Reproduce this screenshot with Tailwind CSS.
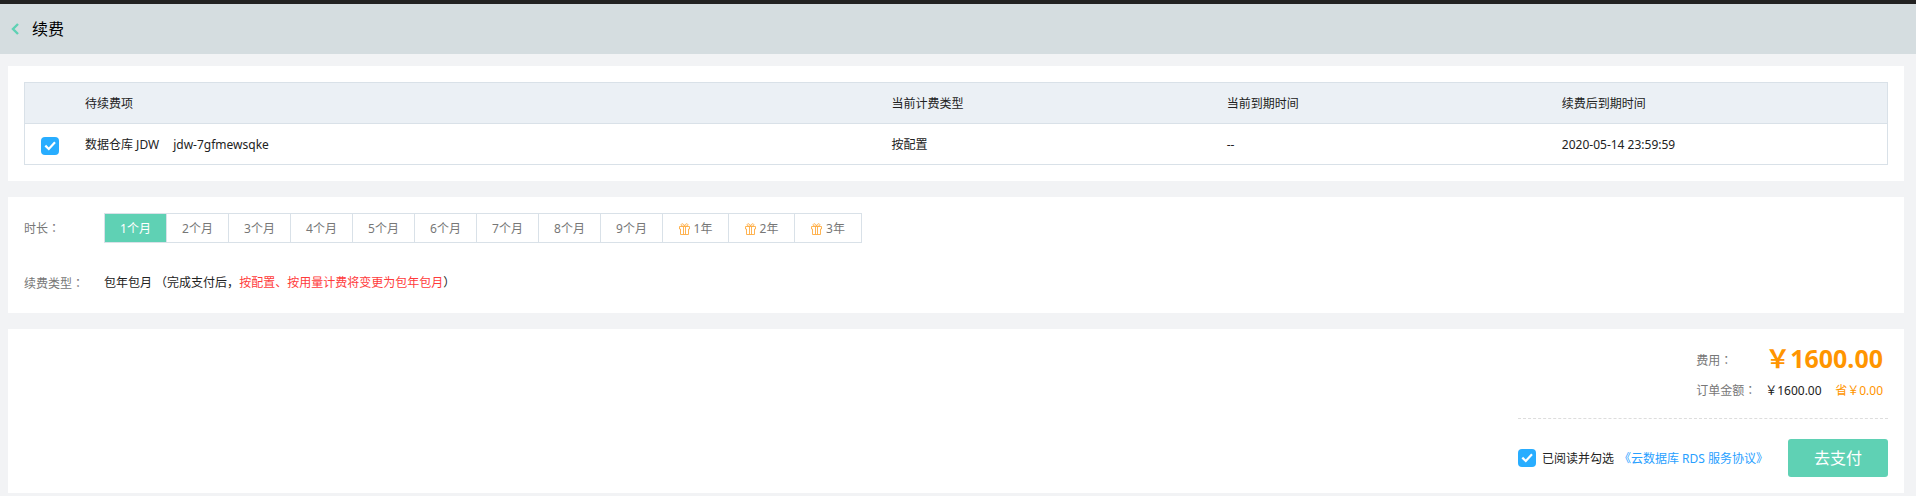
<!DOCTYPE html>
<html lang="zh-CN">
<head>
<meta charset="utf-8">
<meta name="viewport" content="width=device-width, initial-scale=1">
<title>续费</title>
<script src="https://cdn.jsdelivr.net/npm/@tailwindcss/browser@4"></script>
</head>
<body class="min-h-screen bg-[#f2f3f5] border-t-4 border-[#222222] font-['Noto_Sans','Noto_Sans_CJK_SC',sans-serif] text-xs text-[#222222]">
<svg class="hidden" aria-hidden="true">
  <symbol id="tick" viewBox="0 0 18 18"><path d="M4.3 8.6 L7.8 12 L14 5.3" fill="none" stroke="#fff" stroke-width="2.2"/></symbol>
  <symbol id="gift" viewBox="0 0 11 12">
    <g fill="none" stroke="#ffab40" stroke-width=".9">
      <path d="M1.5 6v5.5h8V6M.5 3.5v2.5h1M10.5 3.5v2.5h-1M.5 3.5h10M4.5 3.5v8M6.5 3.5v8M4.6 3.2C2.6 3.2 1.8 2.4 2.2 1.4 2.8.2 4.8.6 5.5 3.2M6.4 3.2C8.4 3.2 9.2 2.4 8.8 1.4 8.2.2 6.2.6 5.5 3.2"/>
    </g>
  </symbol>
</svg>
<header class="flex h-[50px] items-center bg-[#d5dde0]">
  <a href="#" aria-label="返回" class="ml-[11px] mr-[13px]">
    <svg class="h-3 w-2" viewBox="0 0 8 12"><path d="M7 1 L2 6 L7 11" fill="none" stroke="#5fd1b4" stroke-width="2.4"/></svg>
  </a>
  <h1 class="text-base text-black">续费</h1>
</header>
<main class="mt-3 mr-3 ml-2 flex flex-col gap-4">
  <section class="bg-white p-4">
    <table class="w-full table-fixed border-separate border-spacing-0 border border-[#d9e1e8] text-left">
      <colgroup><col class="w-[50px]"><col><col class="w-[18%]"><col class="w-[18%]"><col class="w-[18%]"></colgroup>
      <thead>
        <tr class="h-[41px] bg-[#ebf0f5]">
          <th class="border-b border-[#d9e1e8] p-0" aria-label="选择"></th>
          <th class="border-b border-[#d9e1e8] px-2.5 pt-0.5 pb-0 font-normal">待续费项</th>
          <th class="border-b border-[#d9e1e8] px-2.5 pt-0.5 pb-0 font-normal">当前计费类型</th>
          <th class="border-b border-[#d9e1e8] px-2.5 pt-0.5 pb-0 font-normal">当前到期时间</th>
          <th class="border-b border-[#d9e1e8] px-2.5 pt-0.5 pb-0 font-normal">续费后到期时间</th>
        </tr>
      </thead>
      <tbody>
        <tr class="h-10">
          <td class="p-0">
            <span class="mt-1 ml-4 grid size-[18px]">
              <input type="checkbox" checked aria-label="数据仓库 JDW" class="col-start-1 row-start-1 size-[18px] appearance-none rounded bg-[#28adff]">
              <svg class="pointer-events-none col-start-1 row-start-1 size-[18px]"><use href="#tick"/></svg>
            </span>
          </td>
          <td class="px-2.5 pt-0.5 pb-0"><span class="mr-3.5">数据仓库 JDW</span><span>jdw-7gfmewsqke</span></td>
          <td class="px-2.5 pt-0.5 pb-0">按配置</td>
          <td class="px-2.5 pt-0.5 pb-0">--</td>
          <td class="px-2.5 pt-0.5 pb-0">2020-05-14 23:59:59</td>
        </tr>
      </tbody>
    </table>
  </section>

  <section class="flex flex-col gap-6 bg-white p-4">
    <div class="flex h-[30px] items-center">
      <span class="w-20 text-[#777777]">时长<span class="font-['Noto_Sans_CJK_TC']" lang="zh-TW">：</span></span>
      <div class="flex h-[30px] divide-x divide-[#d9e1e8] border border-[#d9e1e8] text-[#777777]" role="group" aria-label="时长">
        <button type="button" aria-pressed="true" class="w-[62px] bg-[#5fd1b4] pt-0.5 text-white">1个月</button>
        <button type="button" class="w-[62px] pt-0.5">2个月</button>
        <button type="button" class="w-[62px] pt-0.5">3个月</button>
        <button type="button" class="w-[62px] pt-0.5">4个月</button>
        <button type="button" class="w-[62px] pt-0.5">5个月</button>
        <button type="button" class="w-[62px] pt-0.5">6个月</button>
        <button type="button" class="w-[62px] pt-0.5">7个月</button>
        <button type="button" class="w-[62px] pt-0.5">8个月</button>
        <button type="button" class="w-[62px] pt-0.5">9个月</button>
        <button type="button" class="flex w-[66px] items-center justify-center gap-1 pt-0.5"><svg class="h-3 w-[11px]"><use href="#gift"/></svg>1年</button>
        <button type="button" class="flex w-[66px] items-center justify-center gap-1 pt-0.5"><svg class="h-3 w-[11px]"><use href="#gift"/></svg>2年</button>
        <button type="button" class="flex w-[66px] items-center justify-center gap-1 pt-0.5"><svg class="h-3 w-[11px]"><use href="#gift"/></svg>3年</button>
      </div>
    </div>
    <div class="flex h-[30px] items-center pt-0.5">
      <span class="w-20 text-[#777777]">续费类型<span class="font-['Noto_Sans_CJK_TC']" lang="zh-TW">：</span></span>
      <p>包年包月 （完成支付后，<span class="text-[#ff3b3b]">按配置、按用量计费将变更为包年包月</span>）</p>
    </div>
  </section>

  <section class="flex flex-col items-end bg-white p-4">
    <dl class="grid grid-cols-[69px_auto] grid-rows-[30px_30px] pr-[5px] leading-[30px]">
      <dt class="text-[#777777]">费用<span class="font-['Noto_Sans_CJK_TC']" lang="zh-TW">：</span></dt>
      <dd class="text-right text-[25px] leading-[26px] font-bold text-[#ff9500]">￥1600.00</dd>
      <dt class="text-[#777777]">订单金额<span class="font-['Noto_Sans_CJK_TC']" lang="zh-TW">：</span></dt>
      <dd class="flex justify-between leading-8"><span>￥1600.00</span><span class="text-[#ff9500]">省￥0.00</span></dd>
    </dl>
    <div class="mt-[13px] flex items-center border-t border-dashed border-[#dddddd] pt-5">
      <span class="grid size-[18px]">
        <input id="agree" type="checkbox" checked class="col-start-1 row-start-1 size-[18px] appearance-none rounded bg-[#28adff]">
        <svg class="pointer-events-none col-start-1 row-start-1 size-[18px]"><use href="#tick"/></svg>
      </span>
      <label for="agree" class="ml-1.5 pt-0.5">已阅读并勾选</label>
      <a href="#" class="mr-5 ml-[5px] pt-0.5 text-[#28a0ff]">《云数据库 RDS 服务协议》</a>
      <button type="button" class="h-[38px] w-[100px] rounded-[3px] bg-[#5fd1b4] text-base text-white">去支付</button>
    </div>
  </section>
</main>
</body>
</html>
